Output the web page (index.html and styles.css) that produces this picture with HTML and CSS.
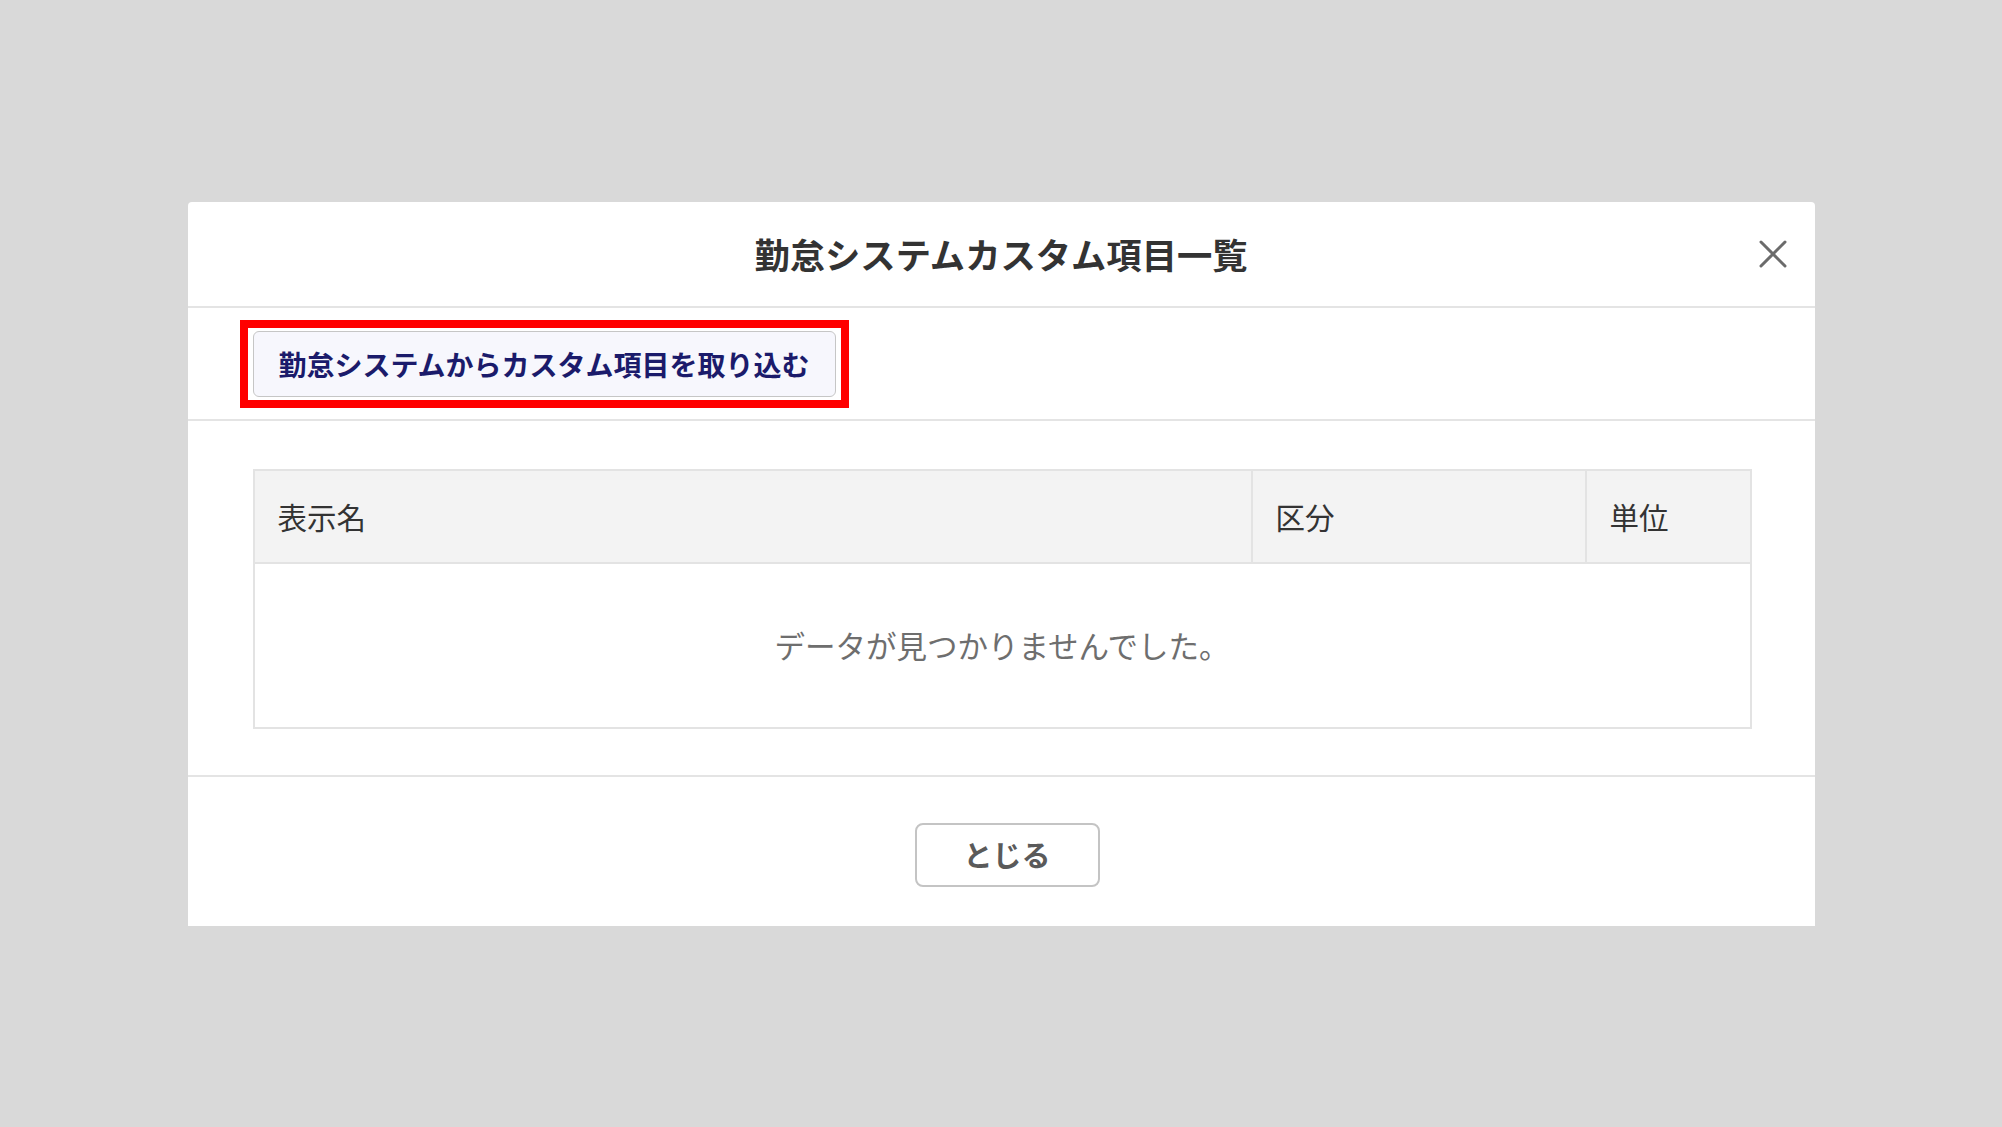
FILE: index.html
```html
<!DOCTYPE html>
<html lang="ja">
<head>
    <meta charset="UTF-8">
    <meta name="viewport" content="width=device-width, initial-scale=1.0">
    <title>勤怠システムカスタム項目一覧</title>
    <link rel="stylesheet" href="styles.css">
</head>
<body>
    <div class="overlay">
        <div class="modal">
            <div class="modal-header">
                <span></span>
                <h1 class="modal-title">勤怠システムカスタム項目一覧</h1>
                <button class="close-button" aria-label="close">
                    <svg width="28" height="28" viewBox="0 0 28 28">
                        <path d="M2 2 L26 26 M26 2 L2 26" stroke="#6b6b6b" stroke-width="3" stroke-linecap="round" fill="none"/>
                    </svg>
                </button>
            </div>

            <div class="modal-toolbar">
                <div class="highlight">
                    <button class="import-button">勤怠システムからカスタム項目を取り込む</button>
                </div>
            </div>

            <div class="modal-body">
                <table class="item-table">
                    <colgroup>
                        <col class="col-name">
                        <col class="col-type">
                        <col class="col-unit">
                    </colgroup>
                    <thead>
                        <tr>
                            <th>表示名</th>
                            <th>区分</th>
                            <th>単位</th>
                        </tr>
                    </thead>
                    <tbody>
                        <tr>
                            <td class="empty" colspan="3">データが見つかりませんでした。</td>
                        </tr>
                    </tbody>
                </table>
            </div>

            <div class="modal-footer">
                <button class="close-text-button">とじる</button>
            </div>
        </div>
    </div>
</body>
</html>
```

FILE: styles.css
```css
body {
    margin: 0;
    padding: 0;
    background: #d9d9d9;
    font-family: "Noto Sans CJK JP", "Noto Sans", sans-serif;
    color: #333;
}

.overlay {
    height: 100vh;
    display: flex;
    align-items: center;
    justify-content: center;
}

.modal {
    width: 1627px;
    background: #fff;
    border-radius: 4px 4px 0 0;
}

.modal-header {
    height: 104px;
    border-bottom: 2px solid #e4e4e4;
    display: grid;
    grid-template-columns: 1fr auto 1fr;
    align-items: center;
}

.modal-title {
    margin: 0;
    font-size: 35.3px;
    font-weight: bold;
    color: #333;
    line-height: 1;
}

.close-button {
    justify-self: end;
    margin-right: 28px;
    width: 28px;
    height: 28px;
    padding: 0;
    border: none;
    background: none;
    cursor: pointer;
}

.close-button svg {
    display: block;
}

.modal-toolbar {
    padding: 12px 0 11px 52px;
    border-bottom: 2px solid #e4e4e4;
}

.highlight {
    display: inline-block;
    border: 8px solid #ff0000;
    padding: 3px 5px;
}

.import-button {
    display: block;
    width: 583px;
    height: 66px;
    background: #f7f7fd;
    border: 1.5px solid #c6c6c6;
    border-radius: 6px;
    font-family: inherit;
    font-size: 28px;
    font-weight: bold;
    color: #1b1b6b;
    line-height: 1;
    padding: 0;
    cursor: pointer;
}

.modal-body {
    padding: 48px 63px 46px 65px;
    border-bottom: 2px solid #e4e4e4;
}

.item-table {
    width: 100%;
    border-collapse: collapse;
    border: 2px solid #e3e3e3;
}

.col-name {
    width: 998px;
}

.col-type {
    width: 334px;
}

.item-table th {
    height: 91px;
    padding: 0 0 0 23px;
    background: #f3f3f3;
    border: 2px solid #e3e3e3;
    text-align: left;
    font-size: 29.5px;
    font-weight: normal;
    color: #333;
}

.item-table td.empty {
    height: 163px;
    padding: 0;
    text-align: center;
    font-size: 30.5px;
    color: #6e6e6e;
}

.modal-footer {
    padding: 46px 0 39px;
    display: flex;
    justify-content: center;
}

.close-text-button {
    width: 185px;
    height: 64px;
    margin-left: 12px;
    background: #fff;
    border: 2px solid #c4c4c4;
    border-radius: 8px;
    font-family: inherit;
    font-size: 29px;
    font-weight: bold;
    color: #5a5a5a;
    line-height: 1;
    padding: 0;
    cursor: pointer;
}
```
